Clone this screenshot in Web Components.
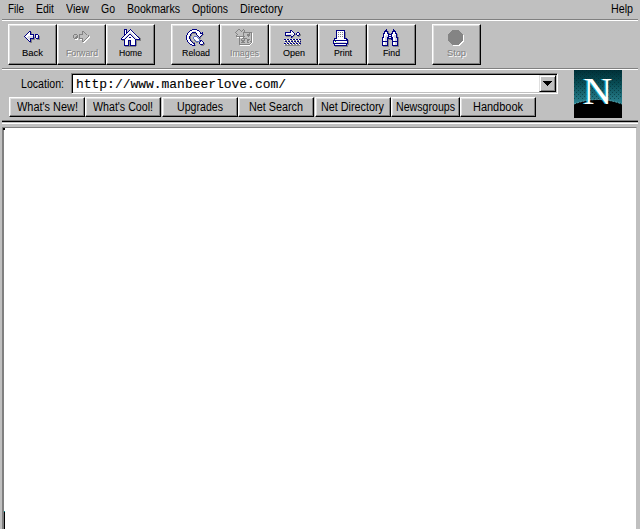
<!DOCTYPE html>
<html lang="en"><head><meta charset="utf-8"><title>Netscape</title>
<style>
html,body{margin:0;height:529px;overflow:hidden;background:#c0c0c0}
body{font:12px "Liberation Sans",Arial,sans-serif;color:#000}
</style></head><body><netscape-window></netscape-window>
<script>
const define=(name,html,after)=>{
  const t=document.createElement('template');t.innerHTML=html;
  customElements.define(name,class extends HTMLElement{
    constructor(){super();this.attachShadow({mode:'open'}).append(t.content.cloneNode(true));}
    connectedCallback(){if(after)after.call(this,this.shadowRoot);}
  });
};
/* Label condensed or widened to fill a fixed width */
define('fit-label',`<style>:host{display:block;white-space:pre;flex:none}span{display:inline-block;transform-origin:0 50%}</style><span></span>`,function(r){
  const s=r.querySelector('span'),w=+this.getAttribute('w');
  s.textContent=this.getAttribute('text');
  this.style.width=w+'px';
  s.style.transform='scaleX('+(w/s.getBoundingClientRect().width)+')';
});
/* Pixel maps: n navy, w white, l light, g grey, e green, c silver */
const colours={n:'#000084',w:'#ffffff',l:'#d8d8e4',g:'#848484',e:'#008400',c:'#c0c0c0',b:'#5a70c8'};
const icons={
back:`


......nn
.....nwng
....nwwng
...nwwwnnnn.nnn
..nwwwwwwwn.nwwn
.nwwwllllln.nwlng
..nwllllllngnwlng
...nwllnnnng.nnng
....nwlngggg..ggg
.....nwng
......nng
.......gg`,
forward:`


..........gg
..........gcg
..........gccg
..ggg..ggggcccg
.gcccg.gccccccccg
.gccgg.gccccccccgw
.gcggg.gcccccccgww
..gggw.ggggcccgww
...www..wwgccgww
..........gcgww
..........ggww
...........ww`,
home:`
...nnn...n
...nwn..nwn
...nwn.nwwwn
...nwnnwwlwwn
...nwnwwlllwwn
...nnwwlnnllwwn
...nwwlnwwnllwwn
..nwwlnwwwwnllwwng
.nwwlnwwnnwwnllwwng
nwwlnwwwwwwwwnllwwng
nnnnwwwwwwwwwwnnnnng
.ggnwwwnnnwwwwnggggg
...nwwwngnwwwwng
...nwwwngnwwwwng
...nwwwngnwwwwng
...nwwwngnwwwwng
...nnnnngnnnnnng
....ggggggggggg`,
reload:`
......nnnnn
....nnwwwwwnn
...nwwwlllwwwn
..nwwwnnnnwwwwn.n
.nwwwnggggnwwwnnn
.nwwng....nwwwwwng
nwwwng.....nwwwng
nwwng...bbb.nwng
nwwng..bwwwb.ng
nwwng..bwwwwbgg
nwwwn...bwwwwb
.nwwng..gbwwwbnn
.nwwwng..gbbbgnwn
..nwwwngg.gg.nwwwn
...nwwwnn....nwwwng
....nnwwn.....nnngg
......nnng.....ggg`,
images:`
...gg...g
..gccg.gcg
.gccccgccg
gcccccccggggggggg
.gccccccgcccccgcgw
..gcccccgcccgggcgw
.gccccccgcccgggcgw
.gggggggggcccgccgw
..wwgwwwgcccccccgw
....gccgggggccccgw
....gcgccgccgggcgw
....gcggggccggccgw
....gccggcccgccggw
....gcggggccggccgw
....gccccccccccgw
....gggggggggggw
.....wwwwwwwwww`,
open:`

......nn
......nwn
.nnnnnnwwn...nn
.nwwwwwwwwn.nwwn
.nwllllllwngnwlng
.nnnnnnlwng..nngg
..gggg.nng....gg
.......ng
........
nnwnnwnnwnnwnnwnn
wggwggwggwggwggwg
.nnwnnwnnwnnwnnwn
.wggwggwggwggwggg
nnwnnwnnwnnwnnwnn
wggwggwggwggwggwg
.ggggggggggggggg`,
print:`

...nnnnnnnnn
...nwwwwwwwn
...nwgwgwgwng
...nwwwwwwwng
...nwgwgwgwng
...nwwwwwwwng
...nwgwgwgwng
...nwwwwwwwng
.nnnwwwwwwwnnn
.nwwwwwwwwwwwnn
nnnnnnnnnnnnnnng
nwewwwwwwwwwwwng
nwwllllllllllwng
nnnnnnnnnnnnnnng
.nwwwwwwwwwwwngg
.nnnnnnnnnnnnng
..ggggggggggggg`,
find:`
....n......n
...nn......nn
..nnnng...nnnn
..nwwng...nwwn
.nnwwnng.nnwwnn
.nwwwwnnnnwwwwng
.nwwllnwwnwwllng
.nwlllnnnnwlllng
nnwllnnwwnnwllnng
nwwllnnnnnnwwllng
nwwllngggnnwwllng
nwwllng...nwwllng
nnnnnng...nnnnnng
nwwllng...nwwllng
nwwllng...nwwllng
nwwllng...nwwllng
nnnnnng...nnnnnng
.gggggg....gggggg`,
stop:`

.....ggggggg
....ggggggggg
...ggggggggggg
..ggggggggggggg
.ggggggggggggggg
.gggggggggggggggw
.gggggggggggggggw
.gggggggggggggggw
.gggggggggggggggw
.gggggggggggggggw
.gggggggggggggggw
..gggggggggggggww
...gggggggggggww
....gggggggggww
.....gggggggww
......wwwwwww`};
define('tool-icon',`<style>:host{display:block;width:19px;height:19px}svg{display:block;overflow:visible}</style><svg width="19" height="19" viewBox="0 0 19 19" shape-rendering="crispEdges"></svg>`,function(r){
  const paths={};
  icons[this.getAttribute('name')].slice(1).split('\n').forEach((row,y)=>[...row].forEach((c,x)=>{if(colours[c])paths[c]=(paths[c]||'')+`M${x} ${y}h1v1h-1z`;}));
  r.querySelector('svg').innerHTML=Object.entries(paths).map(([c,d])=>`<path fill="${colours[c]}" d="${d}"/>`).join('');
});
define('tool-button',`<style>
:host{display:block;box-sizing:border-box;width:49px;height:41px;border:1px solid;border-color:#fff #000 #000 #fff;box-shadow:inset -1px -1px #808080,inset 1px 1px #dfdfdf;font-size:9.5px}
:host([off]){color:#848484;text-shadow:1px 1px #fff}
.i{padding-top:4px;display:flex;justify-content:center;height:18px}.l{display:flex;justify-content:center;line-height:11px;-webkit-text-stroke:.1px}</style><div class="i"><slot></slot></div><div class="l"></div>`,function(r){
r.querySelector('.l').innerHTML=`<fit-label text="${this.getAttribute('label')}" w="${this.getAttribute('w')}"></fit-label>`;});
define('link-button',`<style>:host{display:flex;justify-content:center;box-sizing:border-box;height:20px;line-height:18px;border:1px solid;border-color:#fff #000 #000 #fff;box-shadow:inset -1px -1px #808080,inset 1px 1px #dfdfdf}</style><slot></slot>`);
define('menu-bar',`<style>:host{display:flex;height:19px;line-height:18px;padding-left:8px}
fit-label{margin-right:12px}.h{margin:0 7px 0 auto}</style>
<fit-label text="File" w="16"></fit-label><fit-label text="Edit" w="18"></fit-label><fit-label text="View" w="23"></fit-label><fit-label text="Go" w="14"></fit-label><fit-label text="Bookmarks" w="53"></fit-label><fit-label text="Options" w="36"></fit-label><fit-label text="Directory" w="43"></fit-label><fit-label class="h" text="Help" w="22"></fit-label>`);
define('tool-bar',`<style>:host{display:flex;padding:3px 0 0 8px;height:44px}tool-button[gap]{margin-left:16px}</style>
<tool-button label="Back" w="21"><tool-icon name="back"></tool-icon></tool-button><tool-button off label="Forward" w="32"><tool-icon name="forward"></tool-icon></tool-button><tool-button label="Home" w="23"><tool-icon name="home"></tool-icon></tool-button>
<tool-button gap label="Reload" w="28"><tool-icon name="reload"></tool-icon></tool-button><tool-button off label="Images" w="29"><tool-icon name="images"></tool-icon></tool-button><tool-button label="Open" w="22"><tool-icon name="open"></tool-icon></tool-button><tool-button label="Print" w="18"><tool-icon name="print"></tool-icon></tool-button><tool-button label="Find" w="17"><tool-icon name="find"></tool-icon></tool-button>
<tool-button gap off label="Stop" w="19"><tool-icon name="stop"></tool-icon></tool-button>`);
define('location-field',`<style>:host{display:flex;height:21px;padding-left:21px;align-items:center}
.f{margin-left:7px;box-sizing:border-box;width:487px;height:21px;display:flex;background:#fff;border:1px solid;border-color:#808080 #fff #fff #808080;box-shadow:inset 1px 1px #000,inset -1px -1px #c0c0c0;font:13px "Liberation Mono","Courier New",monospace;line-height:21px;padding-left:4px;-webkit-text-stroke:.1px}
.b{margin:1px 1px 1px auto;width:15px;height:15px;background:#c0c0c0;border:1px solid;border-color:#dfdfdf #000 #000 #dfdfdf;box-shadow:inset 1px 1px #fff,inset -1px -1px #808080}
svg{display:block}</style><fit-label text="Location:" w="43"></fit-label><div class="f"><fit-label text="http://www.manbeerlove.com/" w="210"></fit-label><div class="b"><svg width="15" height="15" shape-rendering="crispEdges"><path d="M3 5h9v1H3zM4 6h7v1H4zM5 7h5v1H5zM6 8h3v1H6zM7 9h1v1H7z"/></svg></div></div>`);
define('link-bar',`<style>:host{display:grid;grid-template-columns:76px 76px 76px 76px 76px 69px 76px;column-gap:.4px;padding:3px 0 0 9px}</style>
<link-button><fit-label text="What's New!" w="61"></fit-label></link-button><link-button><fit-label text="What's Cool!" w="60"></fit-label></link-button><link-button><fit-label text="Upgrades" w="46"></fit-label></link-button><link-button><fit-label text="Net Search" w="54"></fit-label></link-button><link-button><fit-label text="Net Directory" w="63"></fit-label></link-button><link-button><fit-label text="Newsgroups" w="59"></fit-label></link-button><link-button><fit-label text="Handbook" w="50"></fit-label></link-button>`);
define('netscape-logo',`<style>:host{display:block;width:48px;height:48px}svg{display:block}text{font:37px "Liberation Serif",serif}</style>
<svg width="48" height="48" viewBox="0 0 48 48"><defs><linearGradient id="g" x2="0" y2="1"><stop stop-color="#003038"/><stop offset=".28" stop-color="#084c54"/><stop offset=".7" stop-color="#2b8391"/></linearGradient><pattern id="d" width="4" height="4" patternUnits="userSpaceOnUse"><path d="M0 0h1v1H0zM2 2h1v1H2z" fill="#00262c" opacity=".55"/></pattern></defs><path fill="url(#g)" d="M0 0h48v48H0z"/><path fill="url(#d)" d="M0 0h48v30H0z"/><path d="M0 34Q24 25 48 34V48H0Z" fill="#000"/><path d="M0 34Q24 25 48 34" stroke="#57a7b4" fill="none" stroke-dasharray="2 1"/><text x="9.2" y="33.5" fill="#fff" style="text-shadow:-1px 0 #20b0c0" textLength="29" lengthAdjust="spacingAndGlyphs">N</text></svg>`);
define('groove-line',`<style>:host{display:block;height:1px;margin:0 2px;background:#808080;border-bottom:1px solid #fff}</style>`);
define('page-view',`<style>:host{display:flex;flex-direction:column;justify-content:space-between;box-sizing:border-box;height:402px;margin:0 3px 0 2px;background:#fff;border:solid;border-width:1px 1px 0 1px;border-color:#808080 #c0c0c0 #808080 #808080;box-shadow:inset 1px 0 #808080}i{display:block;width:2px;height:2px;background:#000}b{display:block;width:1px;height:17px;margin-left:1px;background:#000;box-shadow:0 -1px #088}</style><i></i><b></b>`);
define('netscape-window',`<style>:host{display:block;width:640px;height:529px;background:#c0c0c0;overflow:hidden}
.n{display:flex;height:50px}.m{width:574px;padding-top:3px;box-sizing:border-box}
.d{height:2px;margin:0 2px;background:linear-gradient(#808080 50%,#000 50%)}.w{height:1px;margin:1px 2px 3px;background:#fff}</style>
<menu-bar></menu-bar><groove-line></groove-line><tool-bar></tool-bar><groove-line></groove-line><div class="n"><div class="m"><location-field></location-field><link-bar></link-bar></div><netscape-logo></netscape-logo></div><div class="d"></div><div class="w"></div><page-view></page-view>`);
</script></body></html>
